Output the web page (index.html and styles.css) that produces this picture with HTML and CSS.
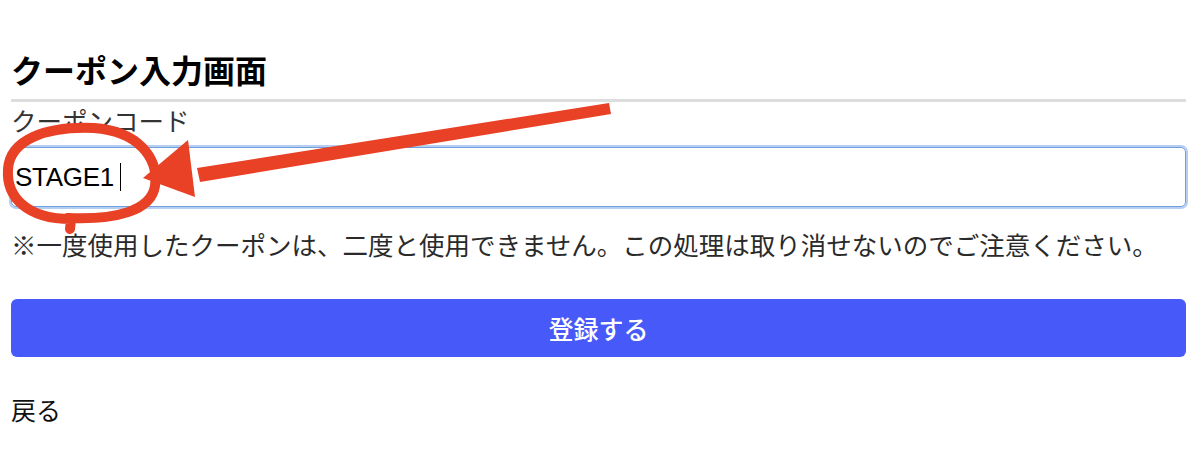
FILE: index.html
```html
<!DOCTYPE html>
<html lang="ja">
<head>
<meta charset="utf-8">
<title>クーポン入力画面</title>
<link rel="stylesheet" href="styles.css">
</head>
<body>
<main class="page">
  <h1 class="title">クーポン入力画面</h1>
  <label class="label" for="code">クーポンコード</label>
  <div class="input"><span class="input-text">STAGE1</span><span class="caret"></span></div>
  <p class="note">※一度使用したクーポンは、二度と使用できません。この処理は取り消せないのでご注意ください。</p>
  <button class="submit" type="button">登録する</button>
  <a class="back">戻る</a>
</main>
<svg class="annot" width="1200" height="463" viewBox="0 0 1200 463" xmlns="http://www.w3.org/2000/svg">
  <path d="M70 229 L71 219 C28 219 6 198 8 169 C10 140 45 126 94 128 C137 131 159 157 155 186 C151 211 116 220 68 218" fill="none" stroke="#e94126" stroke-width="10" stroke-linecap="round" stroke-linejoin="round"/>
  <polygon points="609,103 611,114 200,182 197,168" fill="#e94126"/>
  <polygon points="143,178 188,140 195,197" fill="#e94126"/>
</svg>
</body>
</html>
```
FILE: styles.css
```css
html, body {
  margin: 0;
  padding: 0;
  background: #fff;
}
body {
  font-family: "Noto Sans CJK JP", "Noto Sans", sans-serif;
  color: #222;
  position: relative;
  width: 1200px;
  height: 463px;
  overflow: hidden;
}
.page {
  display: flex;
  flex-direction: column;
  align-items: stretch;
  padding: 50px 14px 0 11px;
}
.title {
  margin: 0;
  font-size: 32px;
  line-height: 38px;
  font-weight: 700;
  color: #000;
  padding-bottom: 11px;
  border-bottom: 3px solid #dddddd;
}
.label {
  margin-top: 3px;
  font-size: 25.5px;
  line-height: 30px;
  color: #333;
}
.input {
  margin-top: 12px;
  height: 60px;
  box-sizing: border-box;
  border: 1px solid #6f9fdc;
  border-radius: 5px;
  box-shadow: 0 0 0 2px rgba(120, 165, 230, 0.55);
  display: flex;
  align-items: center;
  padding-left: 3px;
  font-family: "Liberation Sans", "Noto Sans CJK JP", sans-serif;
  font-size: 26px;
  letter-spacing: -0.3px;
  color: #000;
}
.caret {
  width: 1.5px;
  height: 28px;
  background: #000;
  margin-left: 6px;
}
.note {
  margin: 22px 0 0;
  font-size: 25.5px;
  line-height: 30px;
  color: #2a2a2a;
  font-weight: 400;
  white-space: nowrap;
}
.submit {
  margin-top: 40px;
  height: 58px;
  border: none;
  border-radius: 6px;
  background: #4759f9;
  color: #fff;
  font-family: "Noto Sans CJK JP", sans-serif;
  font-size: 25px;
  font-weight: 500;
}
.back {
  margin-top: 37px;
  font-size: 25px;
  line-height: 30px;
  color: #111;
}
.annot {
  position: absolute;
  left: 0;
  top: 0;
  pointer-events: none;
}
```
